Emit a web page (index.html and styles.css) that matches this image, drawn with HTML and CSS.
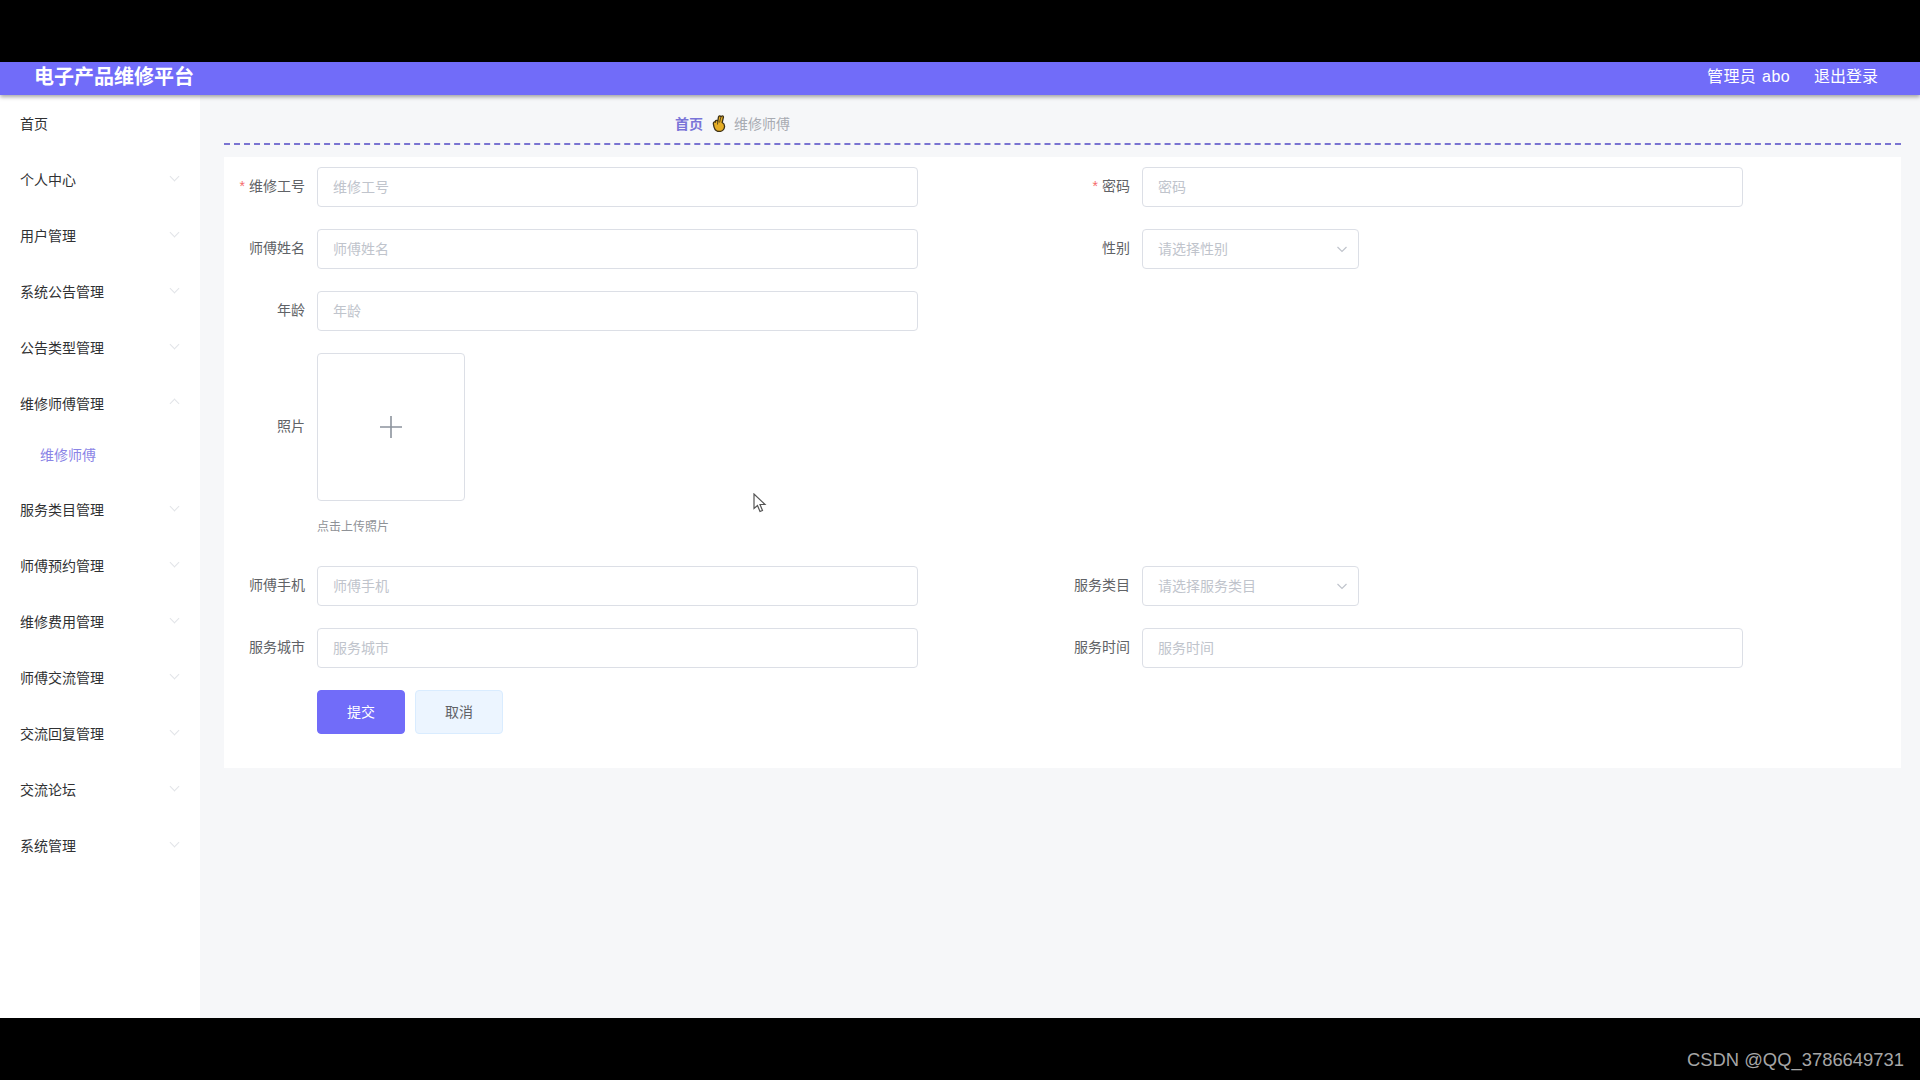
FILE: index.html
```html
<!doctype html>
<html lang="zh-CN">
<head>
  <meta charset="UTF-8">
  <title>电子产品维修平台</title>
  <link rel="stylesheet" href="styles.css">
</head>
<body>
<div class="letterbox"></div>
<div class="app">
  <header class="top">
    <div class="brand">电子产品维修平台</div>
    <div class="top-right">
      <span class="user">管理员 abo</span>
      <a class="logout" href="#">退出登录</a>
    </div>
  </header>
  <div class="layout">
    <aside class="left">
      <div class="menu-item">首页</div>
      <div class="menu-item">个人中心<i class="arrow"></i></div>
      <div class="menu-item">用户管理<i class="arrow"></i></div>
      <div class="menu-item">系统公告管理<i class="arrow"></i></div>
      <div class="menu-item">公告类型管理<i class="arrow"></i></div>
      <div class="menu-item">维修师傅管理<i class="arrow arrow-up"></i></div>
      <div class="menu-sub">维修师傅</div>
      <div class="menu-item">服务类目管理<i class="arrow"></i></div>
      <div class="menu-item">师傅预约管理<i class="arrow"></i></div>
      <div class="menu-item">维修费用管理<i class="arrow"></i></div>
      <div class="menu-item">师傅交流管理<i class="arrow"></i></div>
      <div class="menu-item">交流回复管理<i class="arrow"></i></div>
      <div class="menu-item">交流论坛<i class="arrow"></i></div>
      <div class="menu-item">系统管理<i class="arrow"></i></div>
    </aside>
    <main class="content">
      <div class="crumbs">
        <a class="crumb-home" href="#">首页</a>
        <svg class="crumb-icon" width="14" height="17" viewBox="0 0 14 17">
          <path d="M1.500 9.500C1 7.500 2 6.500 3.300 7V6.500C3.300 5.300 5 5 5.800 6L6.500 1.800C6.800 .3 9 .5 8.800 2.200L9.500 1.200C10.500 .4 11.800 1.200 11.300 2.700L10.200 7.500C12 8.500 12.800 10 12.500 12C12 15 10 16.500 7 16.500C4 16.500 2 14 1.500 9.500Z" fill="#e6ad24" stroke="#3f3216" stroke-width="1.300"/>
          <path d="M5.800 6L5.500 9.500M8.800 2.200L7.600 7.500" fill="none" stroke="#5d4a1c" stroke-width="1"/>
        </svg>
        <span class="crumb-current">维修师傅</span>
      </div>
      <form class="card">
        <div class="row">
          <div class="field">
            <label class="label required">维修工号</label>
            <input class="input" placeholder="维修工号">
          </div>
          <div class="field">
            <label class="label required">密码</label>
            <input class="input" placeholder="密码">
          </div>
        </div>
        <div class="row">
          <div class="field">
            <label class="label">师傅姓名</label>
            <input class="input" placeholder="师傅姓名">
          </div>
          <div class="field">
            <label class="label">性别</label>
            <div class="select">
              <span class="select-text">请选择性别</span>
              <svg width="12" height="12" viewBox="0 0 12 12"><path d="M1.500 4L6 8.500L10.500 4" fill="none" stroke="#c0c4cc" stroke-width="1.200"/></svg>
            </div>
          </div>
        </div>
        <div class="row">
          <div class="field">
            <label class="label">年龄</label>
            <input class="input" placeholder="年龄">
          </div>
        </div>
        <div class="row">
          <div class="field">
            <label class="label label-tall">照片</label>
            <div>
              <div class="upload">
                <svg width="24" height="24" viewBox="0 0 24 24"><path d="M12 1V23M1 12H23" stroke="#8c939d" stroke-width="1.600"/></svg>
              </div>
              <div class="tip">点击上传照片</div>
            </div>
          </div>
        </div>
        <div class="row">
          <div class="field">
            <label class="label">师傅手机</label>
            <input class="input" placeholder="师傅手机">
          </div>
          <div class="field">
            <label class="label">服务类目</label>
            <div class="select">
              <span class="select-text">请选择服务类目</span>
              <svg width="12" height="12" viewBox="0 0 12 12"><path d="M1.500 4L6 8.500L10.500 4" fill="none" stroke="#c0c4cc" stroke-width="1.200"/></svg>
            </div>
          </div>
        </div>
        <div class="row">
          <div class="field">
            <label class="label">服务城市</label>
            <input class="input" placeholder="服务城市">
          </div>
          <div class="field">
            <label class="label">服务时间</label>
            <input class="input" placeholder="服务时间">
          </div>
        </div>
        <div class="buttons">
          <button class="btn btn-primary" type="button">提交</button>
          <button class="btn btn-plain" type="button">取消</button>
        </div>
      </form>
    </main>
  </div>
</div>
<div class="letterbox"></div>
<div class="watermark">CSDN @QQ_3786649731</div>
<svg class="cursor" width="14" height="20" viewBox="0 0 14 20">
  <path d="M1 1V15.500L4.500 12.500L7 18.500L9.500 17.500L7 11.500H12Z" fill="#fff" stroke="#555" stroke-width="1.200"/>
</svg>
</body>
</html>
```

FILE: styles.css
```css
* {
  box-sizing: border-box;
}
body {
  margin: 0;
  height: 1080px;
  overflow: hidden;
  display: flex;
  flex-direction: column;
  background-color: #000;
  font-family: "Liberation Sans", "Noto Sans CJK SC", sans-serif;
  font-size: 14px;
}
.letterbox {
  height: 62px;
  background-color: #000;
}
.app {
  flex: 1;
  display: flex;
  flex-direction: column;
  min-height: 0;
}
.top {
  position: relative;
  z-index: 1;
  height: 33px;
  flex-shrink: 0;
  display: flex;
  justify-content: space-between;
  align-items: center;
  padding: 0 42px 4px 34px;
  background-color: #716cf9;
  box-shadow: 0 2px 4px rgba(0, 0, 0, .35);
  color: white;
}
.brand {
  font-size: 20px;
  font-weight: 700;
  line-height: 28px;
}
.top-right {
  display: flex;
  gap: 24px;
  font-size: 16px;
  margin-bottom: 4px;
}
.user {
  word-spacing: 1px;
  letter-spacing: .4px;
}
.logout {
  color: white;
  text-decoration: none;
}
.layout {
  flex: 1;
  display: flex;
  min-height: 0;
}
.left {
  width: 200px;
  flex-shrink: 0;
  background-color: white;
}
.menu-item {
  height: 56px;
  display: flex;
  justify-content: space-between;
  align-items: center;
  padding: 0 22px 0 20px;
  color: #303133;
}
.menu-sub {
  height: 50px;
  line-height: 49px;
  padding-left: 40px;
  color: #8a84e6;
}
.arrow {
  width: 7px;
  height: 7px;
  margin-bottom: 6px;
  border-right: 1px solid #e2e4e8;
  border-bottom: 1px solid #e2e4e8;
  transform: rotate(45deg);
}
.arrow-up {
  margin-bottom: 0;
  margin-top: 0;
  transform: rotate(225deg);
}
.content {
  flex: 1;
  padding: 0 19px 0 24px;
  background-color: #f6f7f9;
}
.crumbs {
  height: 50px;
  display: flex;
  align-items: center;
  padding: 8px 0 0 451px;
  border-bottom: 2px dashed #7a74d2;
}
.crumb-home {
  font-weight: 700;
  color: #7a74d8;
  text-decoration: none;
}
.crumb-icon {
  margin: 0 8px 0 9px;
}
.crumb-current {
  color: #a8abb2;
}
.card {
  margin-top: 12px;
  padding-top: 10px;
  height: 611px;
  background-color: white;
}
.row {
  display: flex;
  margin-bottom: 22px;
}
.field {
  width: 825px;
  display: flex;
}
.label {
  width: 93px;
  padding-right: 12px;
  line-height: 39px;
  text-align: right;
  color: #606266;
}
.label-tall {
  line-height: 147px;
}
.required::before {
  content: "*";
  margin-right: 4px;
  color: #f56c6c;
}
.input {
  width: 601px;
  height: 40px;
  padding: 0 15px 1px;
  border: 1px solid #dcdfe6;
  border-radius: 4px;
  outline: none;
  background-color: white;
  font: inherit;
  color: #606266;
}
.input::placeholder {
  color: #c0c4cc;
}
.select {
  width: 217px;
  height: 40px;
  display: flex;
  justify-content: space-between;
  align-items: center;
  padding: 0 10px 0 15px;
  border: 1px solid #dcdfe6;
  border-radius: 4px;
  color: #c0c4cc;
}
.select-text {
  margin-bottom: 2px;
}
.upload {
  width: 148px;
  height: 148px;
  display: flex;
  justify-content: center;
  align-items: center;
  border: 1px solid #dcdfe6;
  border-radius: 4px;
}
.tip {
  height: 43px;
  padding-top: 15px;
  font-size: 12px;
  line-height: 22px;
  color: #8f9297;
}
.buttons {
  display: flex;
  gap: 10px;
  padding-left: 93px;
  margin-top: 22px;
}
.btn {
  width: 88px;
  height: 44px;
  padding: 0 0 2px;
  border-radius: 4px;
  font: inherit;
  cursor: pointer;
}
.btn-primary {
  border: 1px solid #716cf9;
  background-color: #716cf9;
  color: white;
}
.btn-plain {
  border: 1px solid #d9ecff;
  background-color: #ecf5ff;
  color: #606266;
}
.watermark {
  position: absolute;
  right: 16px;
  top: 1048px;
  font-family: "Liberation Sans", sans-serif;
  font-size: 18.4px;
  line-height: 24px;
  color: #a6a6a6;
}
.cursor {
  position: absolute;
  left: 753px;
  top: 493px;
}
```
